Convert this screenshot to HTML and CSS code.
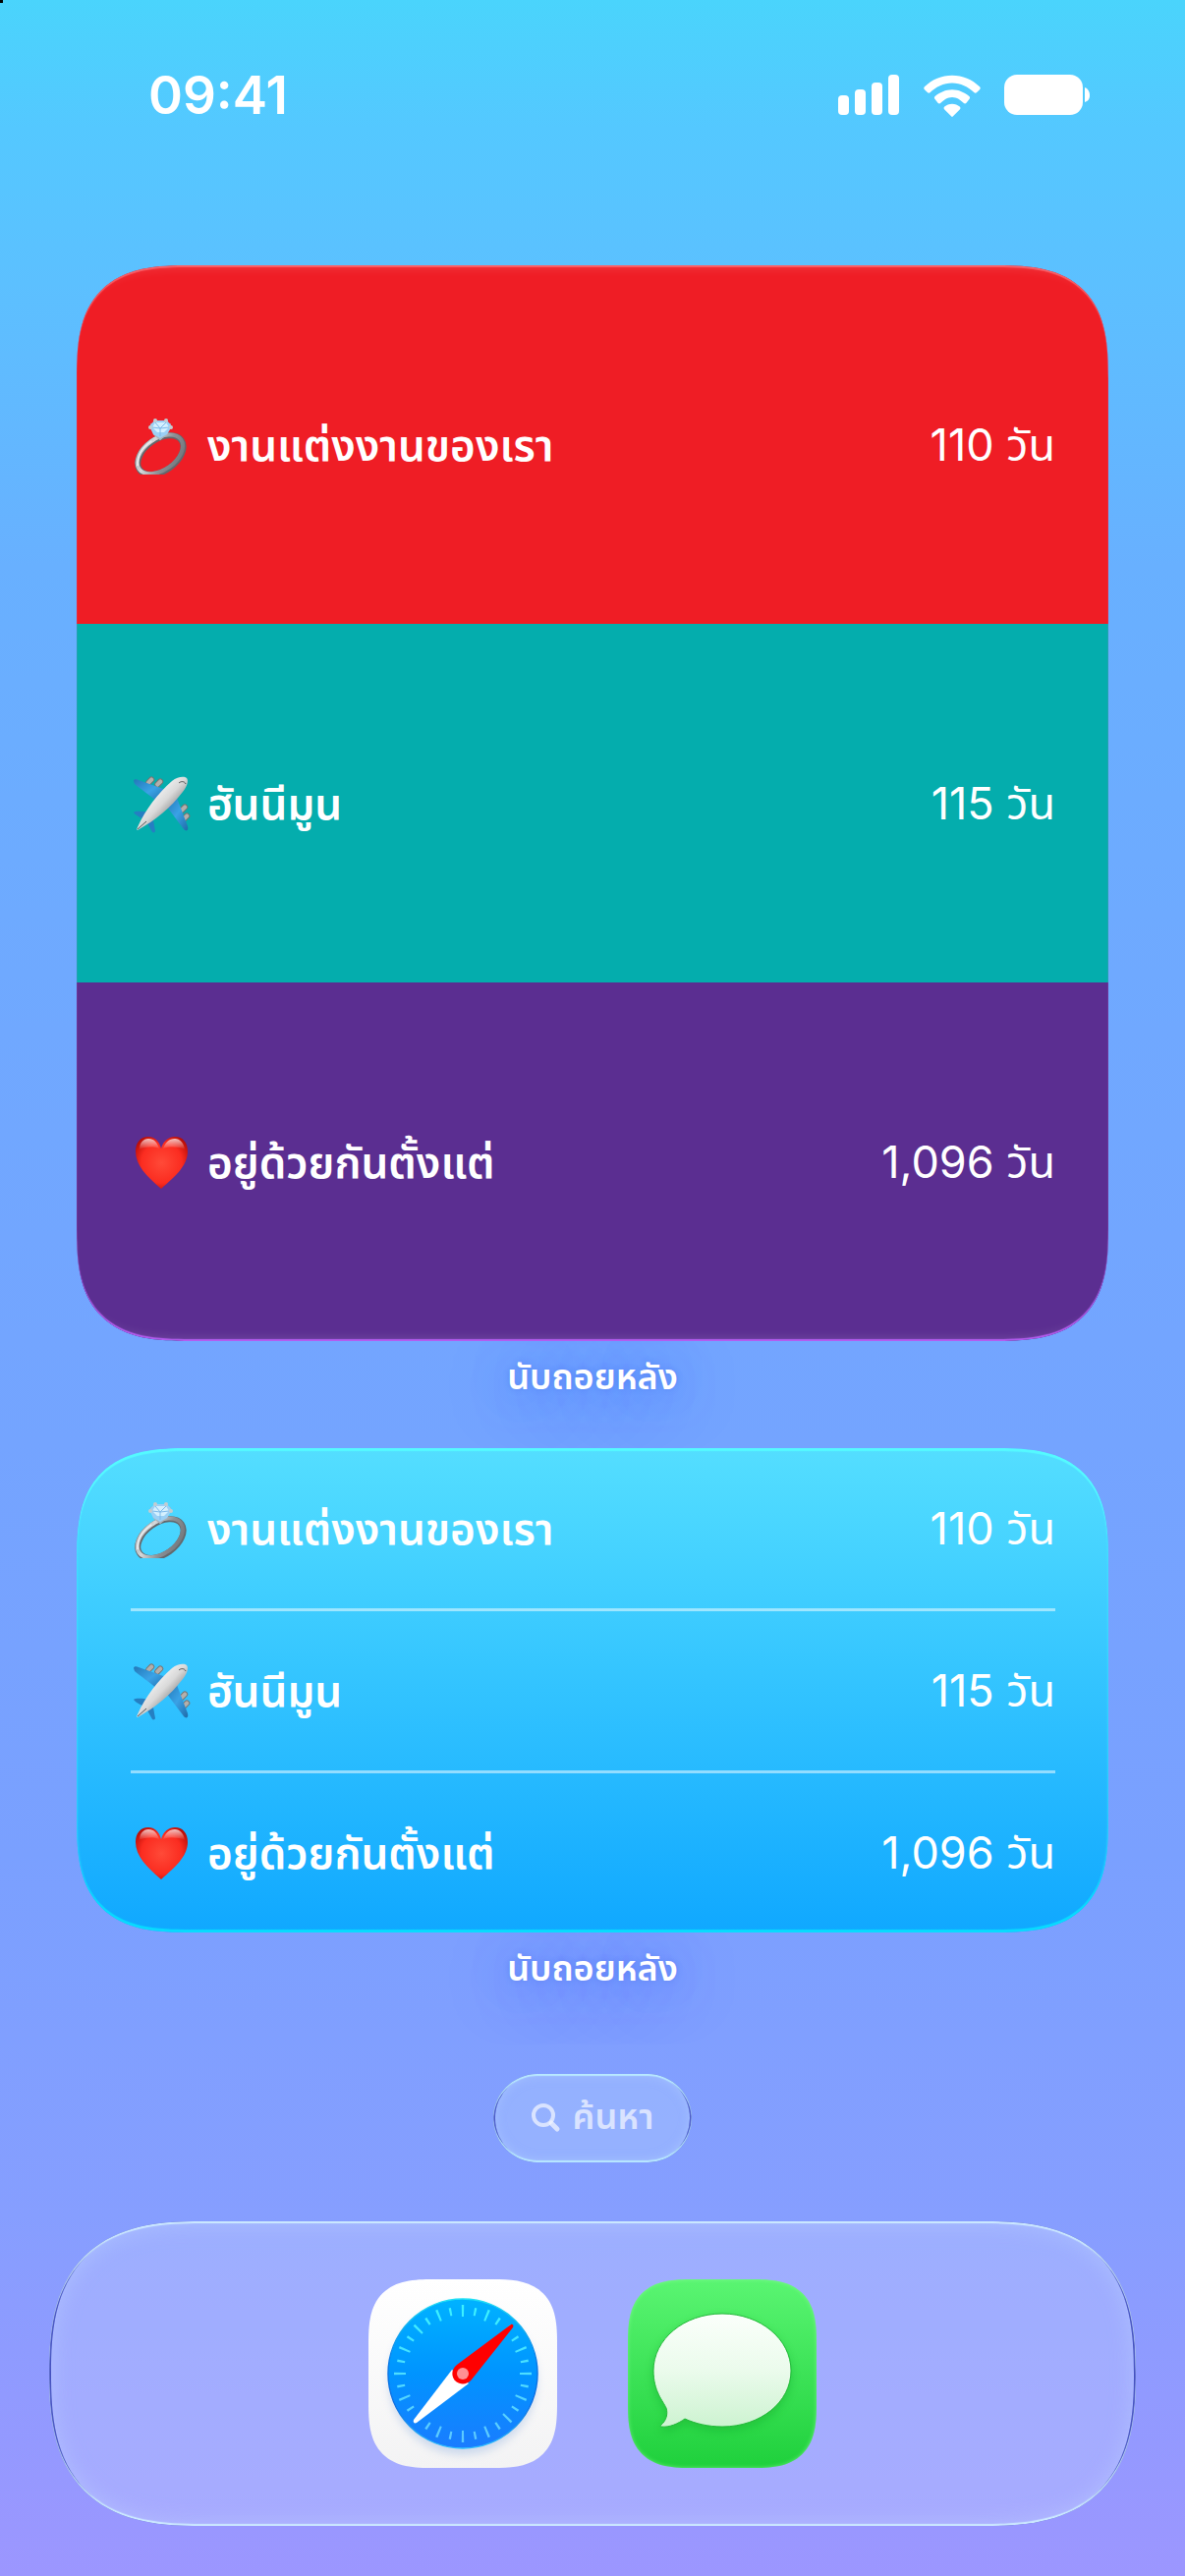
FILE: index.html
```html
<!DOCTYPE html>
<html lang="th">
<head>
  <meta charset="UTF-8">
  <meta name="viewport" content="width=device-width, initial-scale=1.0">
  <title>นับถอยหลัง</title>
  <link rel="stylesheet" href="styles.css">
</head>
<body>
  <!-- shared icons -->
  <svg class="sprite" aria-hidden="true">
    <defs>
      <linearGradient id="silver" x1="0" y1="0" x2="1" y2="1">
        <stop offset="0" stop-color="#8f9499"/>
        <stop offset="0.3" stop-color="#d5d8da"/>
        <stop offset="0.6" stop-color="#8b9095"/>
        <stop offset="1" stop-color="#6d7278"/>
      </linearGradient>
      <linearGradient id="fuselage" x1="0.3" y1="0.3" x2="0.7" y2="0.7">
        <stop offset="0" stop-color="#f4f4f4"/>
        <stop offset="0.5" stop-color="#d9d9d9"/>
        <stop offset="1" stop-color="#8b8b8b"/>
      </linearGradient>
      <linearGradient id="wing" x1="0" y1="0" x2="1" y2="1">
        <stop offset="0" stop-color="#2378b8"/>
        <stop offset="0.5" stop-color="#3aa2e6"/>
        <stop offset="1" stop-color="#1f6ba8"/>
      </linearGradient>
      <radialGradient id="heartFill" cx="0.5" cy="0.5" r="0.6">
        <stop offset="0" stop-color="#ff4a38"/>
        <stop offset="0.65" stop-color="#fb2c20"/>
        <stop offset="1" stop-color="#b80c06"/>
      </radialGradient>
      <linearGradient id="heartShine" x1="0" y1="0" x2="0" y2="1">
        <stop offset="0" stop-color="#fff" stop-opacity="0.75"/>
        <stop offset="1" stop-color="#fff" stop-opacity="0"/>
      </linearGradient>
    </defs>
    <symbol id="ring" viewBox="0 0 60 60">
      <g transform="rotate(-35 30 41)">
        <ellipse cx="30" cy="40" rx="26" ry="16" fill="none" stroke="#63686d" stroke-width="6"/>
        <ellipse cx="30" cy="39" rx="26" ry="16" fill="none" stroke="url(#silver)" stroke-width="4"/>
        <path d="M5 35c5-8 14-12 25-12" fill="none" stroke="#e8eaec" stroke-width="2" stroke-linecap="round"/>
      </g>
      <path d="M20 8l3 11 6 5 6-5 4-11" fill="none" stroke="#a9b3ba" stroke-width="2"/>
      <path d="M23 5h13l5 6-5 8-7 4-7-4-4-8z" fill="#9bd0f5"/>
      <path d="M24 7h11l3 5-5 5h-7l-5-5z" fill="#d4f0ff"/>
      <path d="M24 7l5 6 6-6M21 12l8 1 9-1M29 13v8" fill="none" stroke="#7db9ea" stroke-width="1"/>
      <g fill="#c3cbd0"><circle cx="24" cy="5" r="2"/><circle cx="35" cy="5" r="2"/><circle cx="19" cy="12" r="2"/><circle cx="40" cy="12" r="2"/></g>
    </symbol>
    <symbol id="plane" viewBox="0 0 60 60">
      <g fill="#b3afac" stroke="#77736f" stroke-width="1">
        <rect x="14" y="5" width="9" height="5" rx="2" transform="rotate(-45 18 7)"/>
        <rect x="23" y="7" width="9" height="5" rx="2" transform="rotate(-45 27 9)"/>
        <rect x="48" y="33" width="9" height="5" rx="2" transform="rotate(-45 52 35)"/>
        <rect x="50" y="42" width="9" height="5" rx="2" transform="rotate(-45 54 44)"/>
      </g>
      <path d="M2 7c0-2 3-2 5-1l28 10-8 13C18 21 9 15 3 10z" fill="url(#wing)"/>
      <path d="M35 32l11-8 11 29c1 4-1 6-4 3z" fill="url(#wing)"/>
      <path d="M2 39c3-2 8-1 17 0l-4 7c-5-1-11-4-13-7z" fill="#257fc2"/>
      <path d="M22 47l-6 3 5 9c1 1 3 0 3-1z" fill="#257fc2"/>
      <path d="M6 57c-1-1-1-1 0-3 8-18 21-35 35-47 6-5 13-5 15-3s1 8-4 14C40 34 24 47 6 57z" fill="url(#fuselage)"/>
      <path d="M48 9c2-2 6-2 7 1M6 56l9-8" fill="none" stroke="#555" stroke-width="1"/>
    </symbol>
    <symbol id="heart" viewBox="0 0 60 60">
      <path d="M30 16C32 8 38 4 44 4c8 0 13 6 13 15 0 14-12 25-27 38C15 44 4 33 4 19 4 10 9 4 17 4c6 0 11 4 13 12z" fill="url(#heartFill)"/>
      <path d="M8 17c0-7 4-11 9-11 6 0 9 4 11 10-6-2-14-2-20 1zM32 16c2-6 6-10 12-10 5 0 9 4 10 11-6-3-16-3-22-1z" fill="url(#heartShine)"/>
    </symbol>
  </svg>

  <header class="status-bar">
    <time class="clock">09:41</time>
    <div class="status-icons">
      <svg width="63" height="42" viewBox="0 0 63 42" fill="#fff" role="img" aria-label="Signal">
        <rect x="0" y="21" width="11" height="20" rx="4"/>
        <rect x="17" y="15" width="11" height="26" rx="4"/>
        <rect x="34" y="8" width="11" height="33" rx="4"/>
        <rect x="51" y="0" width="11" height="41" rx="4"/>
      </svg>
      <svg width="58" height="43" viewBox="0 0 60 43" fill="#fff" role="img" aria-label="Wi-Fi">
        <path d="M30 0c11 0 21 4 29 12 1 1 1 2 0 3l-3 3c-1 1-2 1-3 0C47 12 39 8 30 8S13 12 7 18c-1 1-2 1-3 0l-3-3c-1-1-1-2 0-3C9 4 19 0 30 0z"/>
        <path d="M30 15c7 0 13 3 18 7 1 1 1 2 0 3l-3 4c-1 1-2 1-3 0-3-3-7-6-12-6s-9 3-12 6c-1 1-2 1-3 0l-3-4c-1-1-1-2 0-3 5-4 11-7 18-7z"/>
        <path d="M30 30c3 0 6 1 8 3 1 1 1 2 0 3l-7 7c-1 1-1 1-2 0l-7-7c-1-1-1-2 0-3 2-2 5-3 8-3z"/>
      </svg>
      <svg width="87" height="42" viewBox="0 0 87 42" fill="#fff" role="img" aria-label="Battery">
        <rect x="0" y="0" width="80" height="41" rx="13"/>
        <path d="M82 13c3 1 5 4 5 8s-2 6-5 7z"/>
      </svg>
    </div>
  </header>

  <main>
    <section class="widget-group">
      <ul class="widget large">
        <li class="event red">
          <svg class="emoji"><use href="#ring"/></svg>
          <span class="name">งานแต่งงานของเรา</span>
          <span class="days">110 วัน</span>
        </li>
        <li class="event teal">
          <svg class="emoji"><use href="#plane"/></svg>
          <span class="name">ฮันนีมูน</span>
          <span class="days">115 วัน</span>
        </li>
        <li class="event purple">
          <svg class="emoji"><use href="#heart"/></svg>
          <span class="name">อยู่ด้วยกันตั้งแต่</span>
          <span class="days">1,096 วัน</span>
        </li>
      </ul>
      <h2 class="widget-label">นับถอยหลัง</h2>
    </section>

    <section class="widget-group">
      <ul class="widget medium">
        <li class="event">
          <svg class="emoji"><use href="#ring"/></svg>
          <span class="name">งานแต่งงานของเรา</span>
          <span class="days">110 วัน</span>
        </li>
        <li class="event">
          <svg class="emoji"><use href="#plane"/></svg>
          <span class="name">ฮันนีมูน</span>
          <span class="days">115 วัน</span>
        </li>
        <li class="event">
          <svg class="emoji"><use href="#heart"/></svg>
          <span class="name">อยู่ด้วยกันตั้งแต่</span>
          <span class="days">1,096 วัน</span>
        </li>
      </ul>
      <h2 class="widget-label">นับถอยหลัง</h2>
    </section>
  </main>

  <button class="search" type="button">
    <svg width="30" height="30" viewBox="0 0 30 30" fill="none" stroke="currentColor" stroke-linecap="round" aria-hidden="true">
      <circle cx="12" cy="12" r="10" stroke-width="4"/>
      <path d="M20 20l6 6" stroke-width="5"/>
    </svg>
    ค้นหา
  </button>

  <nav class="dock">
    <a class="app safari" href="#" aria-label="Safari">
      <svg viewBox="0 0 192 192">
        <defs>
          <linearGradient id="dial" x1="0" y1="0" x2="0" y2="1">
            <stop offset="0" stop-color="#00b2ff"/>
            <stop offset="0.5" stop-color="#0094ff"/>
            <stop offset="1" stop-color="#1a7cff"/>
          </linearGradient>
          <linearGradient id="rim" x1="0" y1="0" x2="0" y2="1">
            <stop offset="0" stop-color="#1fe0f5"/>
            <stop offset="0.4" stop-color="#0a7be8"/>
            <stop offset="0.7" stop-color="#0a6be0"/>
            <stop offset="1" stop-color="#2cc0ff"/>
          </linearGradient>
          <linearGradient id="tick" x1="0" y1="0" x2="0" y2="1">
            <stop offset="0" stop-color="#3cf0ff"/>
            <stop offset="1" stop-color="#5ccaff"/>
          </linearGradient>
          <filter id="soft" x="-20%" y="-20%" width="140%" height="140%">
            <feGaussianBlur stdDeviation="5"/>
          </filter>
        </defs>
        <circle cx="96" cy="103" r="75" fill="#4a7fd0" opacity="0.25" filter="url(#soft)"/>
        <circle cx="96" cy="96" r="76" fill="url(#dial)" stroke="url(#rim)" stroke-width="1.5"/>
        <g fill="none" stroke="url(#tick)">
          <circle cx="96" cy="96" r="64" stroke-width="12" pathLength="160" stroke-dasharray="0.9 9.1" stroke-dashoffset="0.45"/>
          <circle cx="96" cy="96" r="64" stroke-width="8" pathLength="160" stroke-dasharray="0.9 9.1" stroke-dashoffset="5.45"/>
        </g>
        <path d="M85 92L46 143c-1 3 1 4 3 3l53-40z" fill="#fff"/>
        <path d="M145 46c2-1 3 1 2 3l-42 53c-4 5-11 6-16 2-5-5-5-12 1-17z" fill="#f00"/>
        <circle cx="96" cy="96" r="6" fill="#ff8f93"/>
      </svg>
    </a>
    <a class="app messages" href="#" aria-label="Messages">
      <svg viewBox="0 0 192 192">
        <defs>
          <linearGradient id="bubble" x1="0" y1="0" x2="0" y2="1">
            <stop offset="0" stop-color="#fbfffb"/>
            <stop offset="0.5" stop-color="#ebfbec"/>
            <stop offset="1" stop-color="#cdf3d1"/>
          </linearGradient>
          <path id="bubbleShape" d="M96 35c39 0 70 26 70 58s-31 57-70 57c-14 0-27-3-38-8-7 5-16 9-24 8-1 0-1-1 0-2 5-4 7-11 5-17-3-7-13-17-13-38 0-32 31-58 70-58z"/>
        </defs>
        <use href="#bubbleShape" y="4" fill="#0b9a20" opacity="0.35" filter="url(#soft)"/>
        <use href="#bubbleShape" fill="url(#bubble)" stroke="#22b838" stroke-width="1"/>
      </svg>
    </a>
  </nav>
</body>
</html>
```
FILE: styles.css
```css
* {
  box-sizing: border-box;
}

body {
  margin: 0;
  min-height: 100vh;
  display: flex;
  flex-direction: column;
  align-items: center;
  color: #fff;
  font-family: Inter, "Noto Sans Thai", "Noto Sans", sans-serif;
  background: linear-gradient(180deg, #4ad4fc 0%, #54c8ff 5%, #5cc0ff 11%, #68b0ff 22%, #70a8ff 40%, #74a4ff 56%, #7aa0ff 72%, #869eff 86%, #9c96ff 100%);
}

/* tiny black pixel block in the screen corner */
body::before {
  content: "";
  position: absolute;
  top: 0;
  left: 0;
  width: 3px;
  height: 3px;
  background: #000;
}

.sprite {
  position: absolute;
  width: 0;
  height: 0;
}

main {
  width: 100%;
  padding: 0 78px;
}

/* status bar */
.status-bar {
  width: 100%;
  height: 270px;
  padding: 66px 97px 0 151px;
  display: flex;
  justify-content: space-between;
  align-items: flex-start;
}

.clock {
  font-size: 53px;
  font-weight: 600;
  line-height: 62px;
}

.status-icons {
  height: 62px;
  display: flex;
  align-items: center;
  gap: 24px;
}

/* widgets */
.widget {
  position: relative;
  margin: 0;
  padding: 0;
  list-style: none;
  overflow: hidden;
  border-radius: 88px;
}

.widget::after {
  content: "";
  position: absolute;
  inset: 0;
  border-radius: inherit;
  pointer-events: none;
}

.large::after {
  box-shadow: inset 0 2px 1px rgba(255, 130, 140, 0.6), inset 0 -2px 1px #b45cf0, inset 0 12px 12px -10px rgba(255, 255, 255, 0.15), inset 0 -12px 12px -10px rgba(255, 255, 255, 0.15);
}

.medium {
  background: linear-gradient(180deg, #54deff, #10a8ff);
}

.medium::after {
  box-shadow: inset 0 3px 1px #55faff, inset 0 -3px 1px #08dcff, inset 0 0 3px rgba(80, 250, 255, 0.6);
}

.event {
  display: flex;
  align-items: center;
  padding: 0 54px 0 56px;
  font-size: 45px;
  line-height: 60px;
}

.large .event {
  min-height: 365px;
}

.medium .event {
  min-height: 163px;
  margin: 0 54px 0 55px;
  padding: 0 0 0 1px;
}

.medium .event + .event {
  min-height: 165px;
  border-top: 3px solid rgba(255, 255, 255, 0.5);
}

.red {
  background: #ef1d25;
}

.teal {
  background: #04adad;
}

.purple {
  background: #5b2e91;
}

.emoji {
  flex: none;
  width: 60px;
  height: 60px;
  margin-right: 17px;
}

.name {
  flex: 1;
  font-size: 44px;
  font-weight: 600;
}

.days {
  font-weight: 400;
}

.widget-label {
  margin: 0 0 37px;
  text-align: center;
  font-size: 36px;
  font-weight: 600;
  line-height: 72px;
  text-shadow: 0 0 6px rgba(50, 90, 220, 0.3), 0 6px 60px rgba(30, 90, 255, 0.6);
}

.widget-group:last-child .widget-label {
  margin-bottom: 72px;
}

/* search pill */
.search {
  height: 90px;
  margin-bottom: 60px;
  padding: 0 39px;
  display: flex;
  align-items: center;
  gap: 12px;
  border: none;
  border-radius: 45px;
  background: rgba(170, 200, 255, 0.45);
  box-shadow: inset 0 2px 1px #b8e8ff, inset 0 -2px 1px #b8e8ff, inset 2px 0 0 #4a58c8, inset -2px 0 0 #4a58c8, inset 0 0 12px rgba(190, 220, 255, 0.5);
  color: rgba(240, 244, 255, 0.75);
  font-family: inherit;
  font-size: 36px;
  font-weight: 600;
  cursor: pointer;
}

/* dock */
.dock {
  align-self: stretch;
  height: 310px;
  margin: 0 50px 50px;
  display: flex;
  justify-content: center;
  align-items: center;
  gap: 72px;
  border-radius: 124px;
  background: rgba(190, 200, 255, 0.4);
  box-shadow: inset 0 2px 1px #cdeaff, inset 0 -2px 1px #cdeaff, inset 2px 0 0 #4450c0, inset -2px 0 0 #4450c0, inset 0 0 24px rgba(200, 225, 255, 0.4);
}

.app {
  width: 192px;
  height: 192px;
  overflow: hidden;
  border-radius: 50px;
}

.app svg {
  display: block;
  width: 100%;
  height: 100%;
}

.safari {
  background: linear-gradient(180deg, #fff, #f3f3f4);
}

.messages {
  background: linear-gradient(180deg, #5af572, #1fd03c);
  box-shadow: inset 0 0 4px rgba(150, 255, 160, 0.6);
}

/* continuous corners */
@supports (corner-shape: superellipse(1.5)) {
  .widget {
    border-radius: 116px;
    corner-shape: superellipse(1.5);
  }

  .widget::after {
    corner-shape: inherit;
  }

  .dock {
    border-radius: 155px;
    corner-shape: superellipse(1.4);
  }

  .app {
    border-radius: 66px;
    corner-shape: superellipse(1.5);
  }
}
```
